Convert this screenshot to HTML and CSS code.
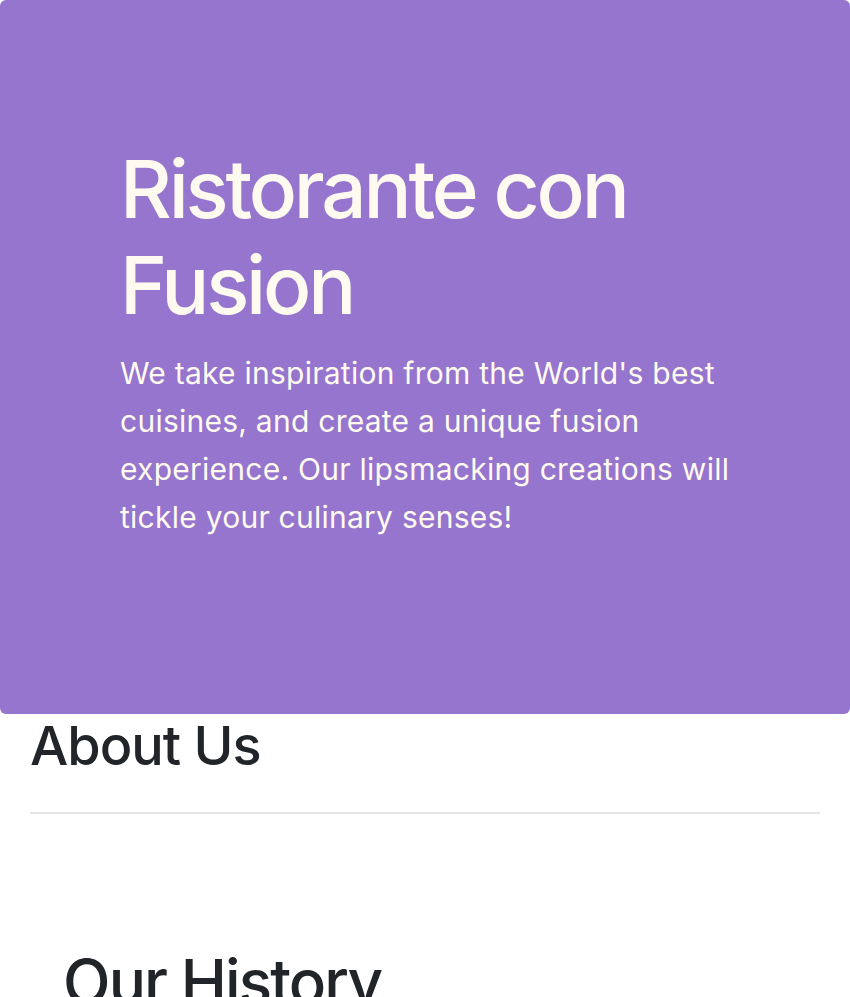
FILE: index.html
```html
<!DOCTYPE html>
<html>
<head>
<meta charset="utf-8">
<link rel="stylesheet" href="styles.css">
</head>
<body>
<header class="jumbotron">
  <h1 class="jumbo-title">Ristorante con Fusion</h1>
  <p class="jumbo-text">We take inspiration from the World's best cuisines, and create a unique fusion experience. Our lipsmacking creations will tickle your culinary senses!</p>
</header>
<main class="about">
  <h2 class="about-title">About Us</h2>
  <hr class="divider">
  <section class="history">
    <h2 class="history-title">Our History</h2>
  </section>
</main>
</body>
</html>
```
FILE: styles.css
```css
html, body {
  margin: 0;
  padding: 0;
  background: #ffffff;
  font-family: Inter, "Noto Sans", sans-serif;
  color: #212529;
}
.jumbotron {
  background: #9575cd;
  border-radius: 6px;
  height: 714px;
  box-sizing: border-box;
  padding: 141px 100px 0 120px;
  color: #fffaf0;
}
.jumbo-title {
  margin: 0;
  max-width: 610px;
  font-size: 80px;
  font-weight: 500;
  line-height: 1.2;
  letter-spacing: -3.2px;
}
.jumbo-text {
  margin: 16px 0 0 0;
  font-size: 30px;
  line-height: 48px;
  font-weight: 400;
  letter-spacing: 0.25px;
}
.about {
  padding: 0 30px;
}
.about-title {
  margin: 0;
  font-size: 54px;
  font-weight: 500;
  line-height: 1.2;
  letter-spacing: -1px;
}
.divider {
  border: 0;
  border-top: 2px solid #e5e5e5;
  margin: 33px 0 0 0;
}
.history {
  padding: 131px 32px 0 33px;
}
.history-title {
  margin: 0;
  font-size: 62px;
  font-weight: 500;
  line-height: 1.2;
  letter-spacing: -1.9px;
}
```
